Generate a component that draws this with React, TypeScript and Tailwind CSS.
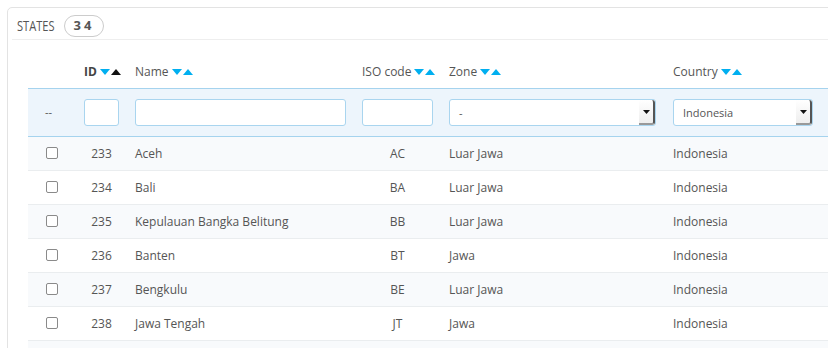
import { FC } from "react";

const rows = [
  { id: 233, name: "Aceh", iso: "AC", zone: "Luar Jawa" },
  { id: 234, name: "Bali", iso: "BA", zone: "Luar Jawa" },
  { id: 235, name: "Kepulauan Bangka Belitung", iso: "BB", zone: "Luar Jawa" },
  { id: 236, name: "Banten", iso: "BT", zone: "Jawa" },
  { id: 237, name: "Bengkulu", iso: "BE", zone: "Luar Jawa" },
  { id: 238, name: "Jawa Tengah", iso: "JT", zone: "Jawa" },
];

const SortArrows: FC<{ activeUp?: boolean }> = ({ activeUp }) => (
  <span className="ml-[3px] inline-flex items-center gap-[1px]">
    <svg width="10" height="6" viewBox="0 0 10 6">
      <path d="M0 0h10L5 6z" fill="#00aff0" />
    </svg>
    <svg width="10" height="6" viewBox="0 0 10 6">
      <path d="M0 6h10L5 0z" fill={activeUp ? "#111" : "#00aff0"} />
    </svg>
  </span>
);

const Select: FC<{ value: string; width: string }> = ({ value, width }) => (
  <div className={`${width} relative h-[27px] rounded-[3px] border border-[#a9d5ef] bg-white pl-[9px] text-[11px] leading-[25px] text-[#555]`}>
    {value}
    <div className="absolute right-0 top-0 bottom-0 flex w-[16px] items-center justify-center border-r-2 border-b-2 border-r-[#555] border-b-[#999] rounded-r-[3px] bg-gradient-to-b from-white to-[#eee]">
      <svg width="7" height="4" viewBox="0 0 7 4">
        <path d="M0 0h7L3.5 4z" fill="#111" />
      </svg>
    </div>
  </div>
);

const Input: FC<{ width: string }> = ({ width }) => (
  <div className={`${width} h-[27px] rounded-[3px] border border-[#a9d5ef] bg-white`} />
);

export default function App() {
  return (
    <div className="h-[348px] w-[828px] overflow-hidden bg-white pl-[7px] pt-[7px] font-['Open_Sans',sans-serif] text-[#555]">
      <div className="h-[400px] w-[860px] rounded-[5px] border border-[#e3e3e3] bg-white">
        <div className="ml-[4px] flex h-[32px] items-center border-b border-[#eee] pl-[5px] pt-[4px]">
          <span className="w-[47px] whitespace-nowrap text-[15px] text-[#555]" style={{ transform: "scaleX(0.74)", transformOrigin: "left" }}>STATES</span>
          <span className="flex h-[22px] w-[40px] items-center justify-center rounded-full border border-[#ccc] text-[13px] font-bold tracking-[3px] text-[#555]">34</span>
        </div>

        <div className="ml-[20px] text-[12px]">
          <div className="flex h-[48px] items-end pb-[7px]">
            <div className="w-[56px]" />
            <div className="flex w-[51px] items-center font-bold text-[#444]">ID<SortArrows activeUp /></div>
            <div className="flex w-[227px] items-center">Name<SortArrows /></div>
            <div className="flex w-[87px] items-center">ISO code<SortArrows /></div>
            <div className="flex w-[224px] items-center">Zone<SortArrows /></div>
            <div className="flex items-center">Country<SortArrows /></div>
          </div>

          <div className="flex h-[49px] items-center border-y border-[#a5d3ee] bg-[#edf5fc]">
            <div className="w-[56px] pl-[17px] text-[11px]">--</div>
            <div className="w-[51px]"><Input width="w-[35px]" /></div>
            <div className="w-[227px]"><Input width="w-[211px]" /></div>
            <div className="w-[87px]"><Input width="w-[71px]" /></div>
            <div className="w-[224px]"><Select value="-" width="w-[207px]" /></div>
            <div><Select value="Indonesia" width="w-[140px]" /></div>
          </div>

          {rows.map((r, i) => (
            <div key={r.id} className={`flex h-[34px] items-center border-b border-[#eaedef] pt-[1px] ${i % 2 === 0 ? "bg-[#f8fafc]" : "bg-white"}`}>
              <div className="w-[56px] pl-[18px]">
                <div className="-mt-[2px] h-[12px] w-[12px] rounded-[2px] border border-[#8a8a8a] bg-white" />
              </div>
              <div className="w-[51px]"><div className="w-[35px] text-center">{r.id}</div></div>
              <div className="w-[227px]">{r.name}</div>
              <div className="w-[87px]"><div className="w-[71px] text-center">{r.iso}</div></div>
              <div className="w-[224px]">{r.zone}</div>
              <div>Indonesia</div>
            </div>
          ))}
          <div className="h-[40px] bg-[#f8fafc]" />
        </div>
      </div>
    </div>
  );
}
